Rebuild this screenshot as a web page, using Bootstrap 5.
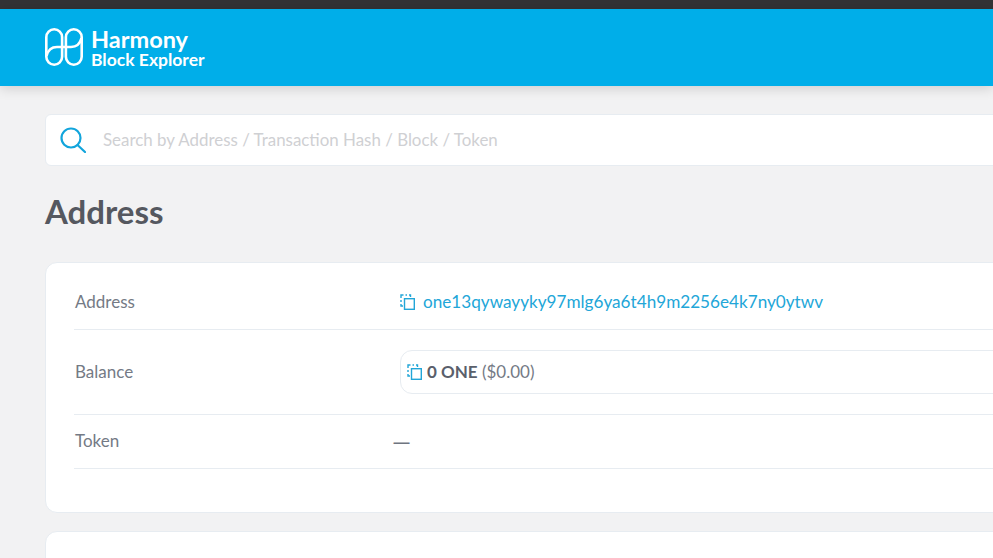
<!DOCTYPE html>
<html lang="en">
<head>
  <meta charset="UTF-8">
  <meta name="viewport" content="width=device-width, initial-scale=1">
  <title>Harmony Block Explorer</title>
  <link href="https://cdn.jsdelivr.net/npm/bootstrap@5.3.0/dist/css/bootstrap.min.css" rel="stylesheet">
  <style>
    html, body { height: 558px; overflow: hidden; }
    body { background: #f2f2f3; font-family: "Lato", "Noto Sans", sans-serif; color: #5a5f6b; font-size: 17px; }
    .top-strip { height: 9px; background: #333335; }
    .hm-header { height: 77px; background: #00aee9; box-shadow: 0 2px 12px rgba(0,0,0,.16); padding: 0 0 2px 45px; }
    .brand-text { margin: 4px 0 0 8px; }
    .brand-name { color: #fff; font-weight: 700; font-size: 23.500px; line-height: 21px; }
    .brand-sub { color: #fff; font-weight: 700; font-size: 17.500px; line-height: 19px; }
    .page-wrap { width: 1300px; height: 472px; overflow: hidden; padding: 28px 0 0 45px; }
    .search-box { height: 52px; background: #fff; border: 1px solid #e7ecf1; border-radius: 6px; padding-left: 14px; }
    .search-text { color: #cfd0d3; font-size: 16.900px; margin-left: 17px; }
    .page-title { font-size: 33px; font-weight: 700; color: #55585f; line-height: 36px; margin: 27px 0 33px; }
    .info-card { background: #fff; border: 1px solid #e7ecf1; border-radius: 12px; padding: 14px 28px 43px; }
    .info-row { border-bottom: 1px solid #e7ecf1; }
    .info-label { width: 320px; padding-left: 1px; color: #747a85; flex-shrink: 0; }
    .row-a { height: 53px; padding-bottom: 2px; }
    .row-b { height: 85px; }
    .row-c { height: 54px; padding-bottom: 1px; }
    .copy-icon { margin-left: 6px; flex-shrink: 0; }
    .addr-link { color: #22a6d8; text-decoration: none; margin-left: 8px; font-size: 17.150px; }
    .bal-box { width: 800px; height: 44px; border: 1px solid #e7ecf1; border-radius: 12px; padding-left: 6px; margin-left: 6px; gap: 5px; }
    .bal-fiat { color: #747a85; }
    .dash-val { color: #6f7580; font-size: 24px; font-weight: 400; line-height: 24px; margin-left: -2px; }
    .next-card { height: 60px; background: #fff; border: 1px solid #e7ecf1; border-radius: 12px; margin-top: 18px; }
  </style>
</head>
<body>
  <div class="top-strip"></div>
  <header class="hm-header d-flex align-items-center">
    <svg width="38" height="38" viewBox="0 0 38 38" fill="none" stroke="#fff" stroke-width="2.600">
      <rect x="1.300" y="1.300" width="15.800" height="35.400" rx="7.900"/>
      <rect x="20.900" y="1.300" width="15.800" height="35.400" rx="7.900"/>
      <path d="M1.500 28 C3 22 7 19 12 19 H26 C31 19 35 16 36.500 10"/>
    </svg>
    <div class="brand-text">
      <div class="brand-name">Harmony</div>
      <div class="brand-sub">Block Explorer</div>
    </div>
  </header>

  <main class="page-wrap">
    <div class="search-box d-flex align-items-center">
      <svg width="26" height="26" viewBox="0 0 26 26" fill="none" stroke="#12a5dc" stroke-width="2.200">
        <circle cx="11" cy="11" r="9.500"/>
        <path d="M17.500 18 L25 25" stroke-linecap="round"/>
      </svg>
      <span class="search-text">Search by Address / Transaction Hash / Block / Token</span>
    </div>

    <h1 class="page-title">Address</h1>

    <section class="info-card">
      <div class="info-row row-a d-flex align-items-center">
        <div class="info-label">Address</div>
        <svg class="copy-icon" width="15" height="16" viewBox="0 0 15 16" fill="none" stroke="#22a6d8" stroke-width="1.400">
          <path d="M1 4V1H3.500M5.500 1H7M9 1H10.500V3M1 6V8M1 10V12H3"/>
          <rect x="4.500" y="4.700" width="9.800" height="10.600"/>
        </svg>
        <a class="addr-link" href="#">one13qywayyky97mlg6ya6t4h9m2256e4k7ny0ytwv</a>
      </div>
      <div class="info-row row-b d-flex align-items-center">
        <div class="info-label">Balance</div>
        <div class="bal-box d-flex align-items-center">
          <svg width="15" height="16" viewBox="0 0 15 16" fill="none" stroke="#22a6d8" stroke-width="1.400">
            <path d="M1 4V1H3.500M5.500 1H7M9 1H10.500V3M1 6V8M1 10V12H3"/>
            <rect x="4.500" y="4.700" width="9.800" height="10.600"/>
          </svg>
          <span><b>0 ONE</b> <span class="bal-fiat">($0.00)</span></span>
        </div>
      </div>
      <div class="info-row row-c d-flex align-items-center">
        <div class="info-label">Token</div>
        <div class="dash-val">—</div>
      </div>
    </section>

    <div class="next-card"></div>
  </main>
  <script src="https://cdn.jsdelivr.net/npm/bootstrap@5.3.0/dist/js/bootstrap.bundle.min.js"></script>
</body>
</html>
